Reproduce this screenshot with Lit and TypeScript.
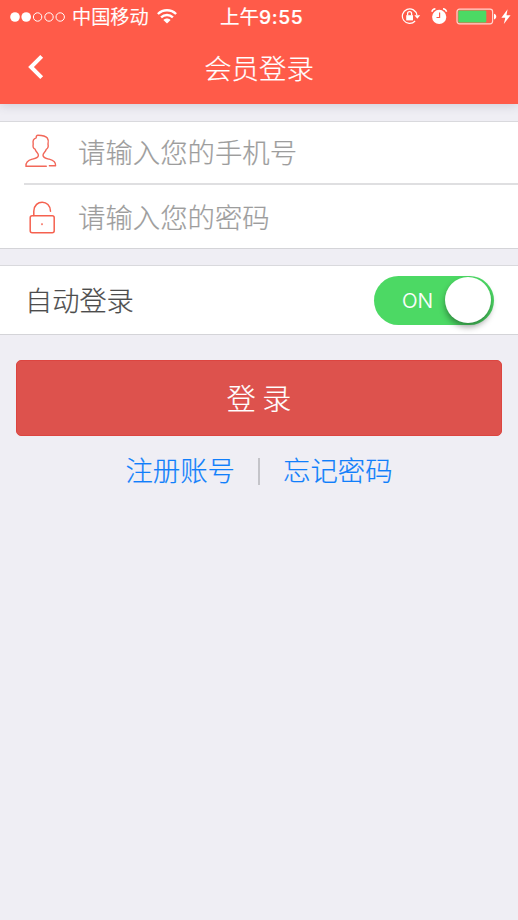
import { LitElement, html, css } from "lit";
import { customElement, property, state } from "lit/decorators.js";

@customElement("status-bar")
class StatusBar extends LitElement {
  static styles = css`
    :host { display: flex; height: 33px; box-sizing: border-box; padding: 0 7px 0 10px; align-items: center; color: #fff; position: relative; }
    svg { display: block; flex: none; }
    .carrier { font-size: 19.2px; line-height: 30px; height: 32px; margin: 0 8px 0 6px; font-weight: 350; white-space: nowrap; }
    .time { position: absolute; left: 220px; top: 0; font-size: 19.5px; line-height: 31px; white-space: nowrap; font-weight: 400; }
    .digits { font-family: Inter, sans-serif; font-weight: 500; font-size: 19.3px; letter-spacing: 0.6px; }
    .right { margin-left: auto; display: flex; align-items: center; }
    .lock { margin-right: 10px; }
    .alarm { margin-right: 8px; }
    .battery { margin-right: 4px; }
  `;
  render() {
    return html`
      <svg width="56" height="12" viewBox="0 0 56 12" fill="none" stroke="#fff" stroke-width="1">
        <circle cx="5" cy="6" r="4.8" fill="#fff" stroke="none" />
        <circle cx="16.2" cy="6" r="4.8" fill="#fff" stroke="none" />
        <circle cx="27.6" cy="6" r="4.2" /><circle cx="39" cy="6" r="4.2" /><circle cx="50.2" cy="6" r="4.2" />
      </svg>
      <span class="carrier">中国移动</span>
      <svg width="20" height="16" viewBox="0 0 20 16" fill="none" stroke="#fff" stroke-width="2.4">
        <path d="M.9 5C6 0 14 0 19.1 5M4.1 8.4C7.4 5.2 12.6 5.2 15.9 8.4" />
        <path d="M6.4 11c2-2 5.2-2 7.2 0L10 14.6z" fill="#fff" stroke="none" />
      </svg>
      <span class="time">上午<span class="digits">9:55</span></span>
      <div class="right">
        <svg class="lock" width="20" height="18" viewBox="0 0 20 18" fill="none" stroke="#fff" stroke-width="1.2">
          <path d="M14.1 13A7.3 7.3 0 1 1 15.9 7.2" />
          <path d="M13.4 7.2h5.8l-2.9 3.6z" fill="#fff" stroke="none" />
          <path d="M5.2 7.2h6.8v5.2H5.2z" fill="#fff" stroke="none" />
          <path d="M6.6 7.4V5.6a2 2 0 0 1 4 0v1.8" stroke-width="1.3" />
        </svg>
        <svg class="alarm" width="17" height="18" viewBox="0 0 17 18" fill="none">
          <circle cx="8.2" cy="8.9" r="7.1" fill="#fff" />
          <path d="M.8 3.8C1.3 2 2.7.9 4.4.8M12 .8c1.7.1 3.1 1.2 3.6 3" stroke="#fff" stroke-width="1.4" />
          <path d="M8.6 4.6v4.9H5.5" stroke="#ff5b49" stroke-width="1.2" />
        </svg>
        <svg class="battery" width="41" height="18" viewBox="0 0 41 18">
          <rect x="1" y="1.2" width="35.6" height="14.6" rx="2.5" fill="none" stroke="#ffd6cf" stroke-width="1.2" />
          <rect x="2.3" y="2.4" width="28" height="12.2" rx="1" fill="#4cd964" />
          <path d="M38 5.8c3 .8 3 4.8 0 5.6z" fill="#fff" />
        </svg>
        <svg width="10" height="16" viewBox="0 0 10 16"><path d="M6.6.3.4 8.8h3.9L2.8 15l6.8-8.8H5.5z" fill="#fff" /></svg>
      </div>
    `;
  }
}

@customElement("toggle-switch")
class ToggleSwitch extends LitElement {
  @property({ type: Boolean }) on = false;
  static styles = css`
    :host { display: block; }
    .track { width: 120px; height: 49px; box-sizing: border-box; border-radius: 25px; background: #4cd964; display: flex; align-items: center; justify-content: flex-end; padding: 0 3px 0 0; }
    .label { color: #fff; font: 300 20.5px/49px Inter, sans-serif; height: 48px; margin-right: 12px; }
    .knob { width: 46px; height: 46px; border-radius: 50%; background: #fff; box-shadow: 0 4px 6px rgba(0, 0, 0, 0.38); }
  `;
  render() {
    return html`<div class="track"><span class="label">${this.on ? "ON" : "OFF"}</span><span class="knob"></span></div>`;
  }
}

@customElement("app-root")
class AppRoot extends LitElement {
  @state() private autoLogin = true;
  static styles = css`
    :host { display: block; height: 920px; overflow: hidden; background: #efeef4; font-family: "Noto Sans CJK SC", sans-serif; font-weight: 300; -webkit-text-stroke: 0.2px; }
    svg { display: block; flex: none; }
    .header { height: 103.5px; background: #ff5b49; box-shadow: 0 1px 10px rgba(60, 60, 90, 0.2); }
    .nav { height: 68px; display: grid; grid-template-columns: 60px 1fr 60px; align-items: center; color: #fff; }
    .back { margin-left: 27px; }
    .title { font-size: 27.4px; line-height: 68px; text-align: center; }
    .card { background: #fff; border-top: 1px solid #d9d9dd; border-bottom: 1px solid #d4d4d8; box-sizing: border-box; }
    .fields { margin-top: 17px; height: 128.5px; padding-left: 24px; }
    .field { display: flex; align-items: center; height: 61.5px; color: #9d9d9d; font-size: 27.4px; }
    .field span:last-child { line-height: 58px; height: 60px; }
    .field + .field { border-top: 2px solid #dfdfe1; height: 63px; }
    .icon { width: 54px; }
    .icon.user { padding-bottom: 3px; }
    .auto { margin-top: 16px; height: 70px; display: flex; align-items: center; justify-content: space-between; padding: 0 24px 0 25px; color: #4c4c4c; font-size: 27.2px; }
    .auto > span { line-height: 66px; height: 68px; }
    .submit { margin: 25px 16px 0; height: 76px; border-radius: 5px; box-sizing: border-box; border: 1px solid #dc4540; background: #dd524d; color: #fff; display: flex; align-items: center; justify-content: center; font-size: 29px; line-height: 72px; padding-bottom: 2px; white-space: pre; }
    .links { display: flex; justify-content: center; align-items: center; height: 66px; color: #107ffb; font-size: 27.4px; }
    .bar { width: 2px; height: 27px; background: #c4c4c9; margin: 4px 23px 0; }
  `;
  render() {
    return html`
      <div class="header">
        <status-bar></status-bar>
        <div class="nav">
          <svg class="back" width="18" height="26" viewBox="0 0 18 26"><path d="M14.7 2.4 4 13l10.7 10.6" fill="none" stroke="#fff" stroke-width="4" /></svg>
          <span class="title">会员登录</span>
        </div>
      </div>
      <div class="card fields">
        <div class="field">
          <span class="icon user">
            <svg width="34" height="36" viewBox="0 0 34 36" fill="none" stroke="#f2685a" stroke-width="1.4" stroke-linejoin="round" stroke-linecap="round">
              <path d="M22.3 33.3H2c-.5-4.4 2.2-6 6.2-7.1 4.1-1.1 6.2-1.6 6.2-4 0-2.3-2.3-2.8-3.3-6-1.9-.7-2.3-3-1.9-5.2-.6-3.3.5-5.4 3-6.1-.1-1.6.5-2.7 1.8-2.7 3.8 0 7.4.4 9.3 2.8 1.5 1.9 1 4.1.7 6 .5 2.3-.3 4.6-1.7 5.3-1 3.1-3.3 3.7-3.3 5.9 0 2.4 2.2 2.9 6.2 4 4.2 1.1 6.8 2.6 6.4 6.6h-6.2" />
            </svg>
          </span>
          <span>请输入您的手机号</span>
        </div>
        <div class="field">
          <span class="icon">
            <svg width="34" height="36" viewBox="0 0 34 36" fill="none" stroke="#f5614f" stroke-width="1.5" stroke-linecap="round">
              <rect x="6.2" y="16.8" width="24" height="17" rx="2" />
              <path d="M9.8 16.4v-4.2C10.2 0 26.4.4 26.5 12.3" /><circle cx="18" cy="25.3" r=".3" />
            </svg>
          </span>
          <span>请输入您的密码</span>
        </div>
      </div>
      <div class="card auto">
        <span>自动登录</span>
        <toggle-switch ?on=${this.autoLogin}></toggle-switch>
      </div>
      <div class="submit">登 录</div>
      <div class="links"><span>注册账号</span><span class="bar"></span><span>忘记密码</span></div>
    `;
  }
}
